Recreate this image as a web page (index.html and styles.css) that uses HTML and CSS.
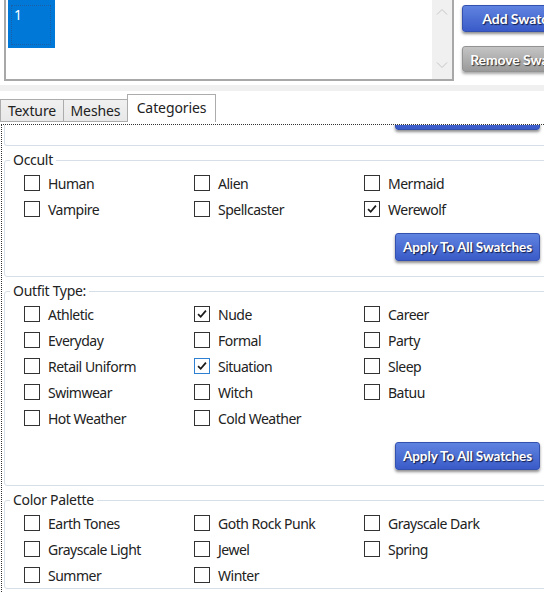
FILE: index.html
```html
<!DOCTYPE html>
<html lang="en">
<head>
    <meta charset="UTF-8">
    <title>Swatch Categories</title>
    <link rel="stylesheet" href="styles.css">
</head>
<body>
    <div class="top">
        <div class="swatch-list">
            <div class="swatch selected"><span>1</span></div>
            <div class="scrollbar">
                <svg width="12" height="8" viewBox="0 0 12 8"><path d="M1 6.5 L6 1.5 L11 6.5" fill="none" stroke="#c6c6c6" stroke-width="1"/></svg>
                <svg width="12" height="8" viewBox="0 0 12 8"><path d="M1 1.5 L6 6.5 L11 1.5" fill="none" stroke="#c6c6c6" stroke-width="1"/></svg>
            </div>
        </div>
        <div class="swatch-actions">
            <button class="btn blue">Add Swatch</button>
            <button class="btn gray">Remove Swatch</button>
        </div>
    </div>
    <div class="band"></div>
    <div class="tabs">
        <div class="tab texture">Texture</div>
        <div class="tab meshes">Meshes</div>
        <div class="tab active">Categories</div>
    </div>
    <div class="panel">
        <div class="group tail">
            <div class="apply-row"><button class="btn blue apply">Apply To All Swatches</button></div>
        </div>

        <fieldset class="group">
            <legend>Occult</legend>
            <div class="options">
                <label class="opt"><span class="box"></span>Human</label>
                <label class="opt"><span class="box"></span>Alien</label>
                <label class="opt"><span class="box"></span>Mermaid</label>
                <label class="opt"><span class="box"></span>Vampire</label>
                <label class="opt"><span class="box"></span>Spellcaster</label>
                <label class="opt"><span class="box checked"><svg viewBox="0 0 16 16"><path d="M3.5 8.2 L6.5 11.2 L12.5 4.2"/></svg></span>Werewolf</label>
            </div>
            <div class="apply-row"><button class="btn blue apply">Apply To All Swatches</button></div>
        </fieldset>

        <fieldset class="group">
            <legend>Outfit Type:</legend>
            <div class="options">
                <label class="opt"><span class="box"></span>Athletic</label>
                <label class="opt"><span class="box checked"><svg viewBox="0 0 16 16"><path d="M3.5 8.2 L6.5 11.2 L12.5 4.2"/></svg></span>Nude</label>
                <label class="opt"><span class="box"></span>Career</label>
                <label class="opt"><span class="box"></span>Everyday</label>
                <label class="opt"><span class="box"></span>Formal</label>
                <label class="opt"><span class="box"></span>Party</label>
                <label class="opt"><span class="box"></span>Retail Uniform</label>
                <label class="opt"><span class="box checked hover"><svg viewBox="0 0 16 16"><path d="M3.5 8.2 L6.5 11.2 L12.5 4.2"/></svg></span>Situation</label>
                <label class="opt"><span class="box"></span>Sleep</label>
                <label class="opt"><span class="box"></span>Swimwear</label>
                <label class="opt"><span class="box"></span>Witch</label>
                <label class="opt"><span class="box"></span>Batuu</label>
                <label class="opt"><span class="box"></span>Hot Weather</label>
                <label class="opt"><span class="box"></span>Cold Weather</label>
            </div>
            <div class="apply-row"><button class="btn blue apply">Apply To All Swatches</button></div>
        </fieldset>

        <fieldset class="group">
            <legend>Color Palette</legend>
            <div class="options">
                <label class="opt"><span class="box"></span>Earth Tones</label>
                <label class="opt"><span class="box"></span>Goth Rock Punk</label>
                <label class="opt"><span class="box"></span>Grayscale Dark</label>
                <label class="opt"><span class="box"></span>Grayscale Light</label>
                <label class="opt"><span class="box"></span>Jewel</label>
                <label class="opt"><span class="box"></span>Spring</label>
                <label class="opt"><span class="box"></span>Summer</label>
                <label class="opt"><span class="box"></span>Winter</label>
            </div>
        </fieldset>
    </div>
</body>
</html>
```

FILE: styles.css
```css
body {
    margin: 0;
    width: 544px;
    height: 592px;
    overflow: hidden;
    background: #fff;
    font-family: "Noto Sans", "Open Sans", sans-serif;
    font-size: 14px;
    letter-spacing: -0.5px;
    color: #222;
}
.top {
    display: flex;
    height: 85px;
}
.swatch-list {
    display: flex;
    flex-shrink: 0;
    box-sizing: border-box;
    width: 450px;
    height: 81px;
    margin-left: 4px;
    border: 2px solid #a8a8a8;
    border-top: none;
}
.swatch {
    position: relative;
    width: 47px;
    height: 48px;
    margin-left: 2px;
    background: #0078d7;
    color: #fff;
}
.swatch::after {
    content: "";
    position: absolute;
    left: 3px;
    top: 5px;
    right: 4px;
    bottom: 3px;
    border: 1px dotted #1b5fa6;
}
.swatch span {
    display: block;
    padding: 5px 0 0 6px;
    font-size: 14px;
}
.scrollbar {
    display: flex;
    flex-direction: column;
    justify-content: space-between;
    align-items: center;
    width: 20px;
    margin-left: auto;
    padding: 8px 0 10px;
    box-sizing: border-box;
    background: #f0f0f0;
}
.swatch-actions {
    display: flex;
    flex-direction: column;
    flex-shrink: 0;
    gap: 14px;
    margin-left: 8px;
    padding-top: 5px;
}
.btn {
    font-family: "Lato", "Liberation Sans", sans-serif;
    font-weight: bold;
    font-size: 13.5px;
    letter-spacing: -0.1px;
    color: #fff;
    text-shadow: 1px 1px 1px rgba(10, 20, 60, 0.9);
    border-radius: 3px;
    cursor: pointer;
    padding: 0;
    white-space: nowrap;
}
.btn.blue {
    background: linear-gradient(#5f83e0, #3a5bc8);
    border: 1px solid #3451b0;
    box-shadow: 0 2px 3px rgba(0, 0, 0, 0.45);
}
.btn.gray {
    background: linear-gradient(#c4c4c4, #9a9a9a);
    border: 1px solid #939393;
    box-shadow: 0 2px 3px rgba(0, 0, 0, 0.35);
    text-shadow: 1px 1px 1px rgba(40, 40, 40, 0.9);
}
.swatch-actions .btn {
    width: 114px;
    height: 27px;
    font-size: 14px;
}
.swatch-actions .btn.gray {
    height: 26px;
}
.band {
    height: 6px;
    background: #f0f0f0;
}
.tabs {
    display: flex;
    align-items: flex-end;
    height: 31px;
}
.tab {
    box-sizing: border-box;
    height: 23px;
    line-height: 21px;
    font-size: 14px;
    letter-spacing: -0.1px;
    text-align: center;
    background: linear-gradient(#f0f0f0, #e8e8e8);
    border: 1px solid #acacac;
    margin-right: -1px;
}
.tab.texture {
    width: 64px;
}
.tab.meshes {
    width: 65px;
}
.tab.active {
    width: 89px;
    height: 28px;
    line-height: 25px;
    background: #fff;
    border-bottom: none;
}
.panel {
    box-sizing: border-box;
    height: 468px;
    margin: 2px 0 0 1px;
    border-top: 1px dotted #333;
    border-left: 1px dotted #333;
    overflow: hidden;
}
.group {
    box-sizing: border-box;
    width: 553px;
    min-inline-size: 0;
    margin: 4px 0 0 2px;
    padding: 0;
    border: 1px solid #d6dfe7;
    border-radius: 3px;
}
.group legend {
    margin-left: 5px;
    padding: 0 3px;
    font-size: 14px;
    letter-spacing: -0.3px;
    line-height: 20px;
}
.group.tail {
    display: flow-root;
    height: 21px;
    margin-top: 0;
    border-top: none;
    border-radius: 0 0 3px 3px;
}
.group.tail .apply-row {
    margin-top: -23px;
}
.options {
    display: grid;
    grid-template-columns: 170px 170px 170px;
    grid-auto-rows: 26px;
    padding-left: 19px;
}
.opt {
    display: flex;
    align-items: center;
    gap: 8px;
}
.box {
    box-sizing: border-box;
    width: 16px;
    height: 16px;
    border: 1px solid #333;
    background: #fff;
}
.box.hover {
    border-color: #2f7fd2;
}
.box svg {
    display: block;
    width: 14px;
    height: 14px;
}
.box svg path {
    fill: none;
    stroke: #1a1a1a;
    stroke-width: 2;
}
.apply-row {
    display: flex;
    justify-content: flex-end;
    padding-right: 16px;
    margin: 11px 0 15px;
}
.apply {
    width: 145px;
    height: 28px;
}
```
